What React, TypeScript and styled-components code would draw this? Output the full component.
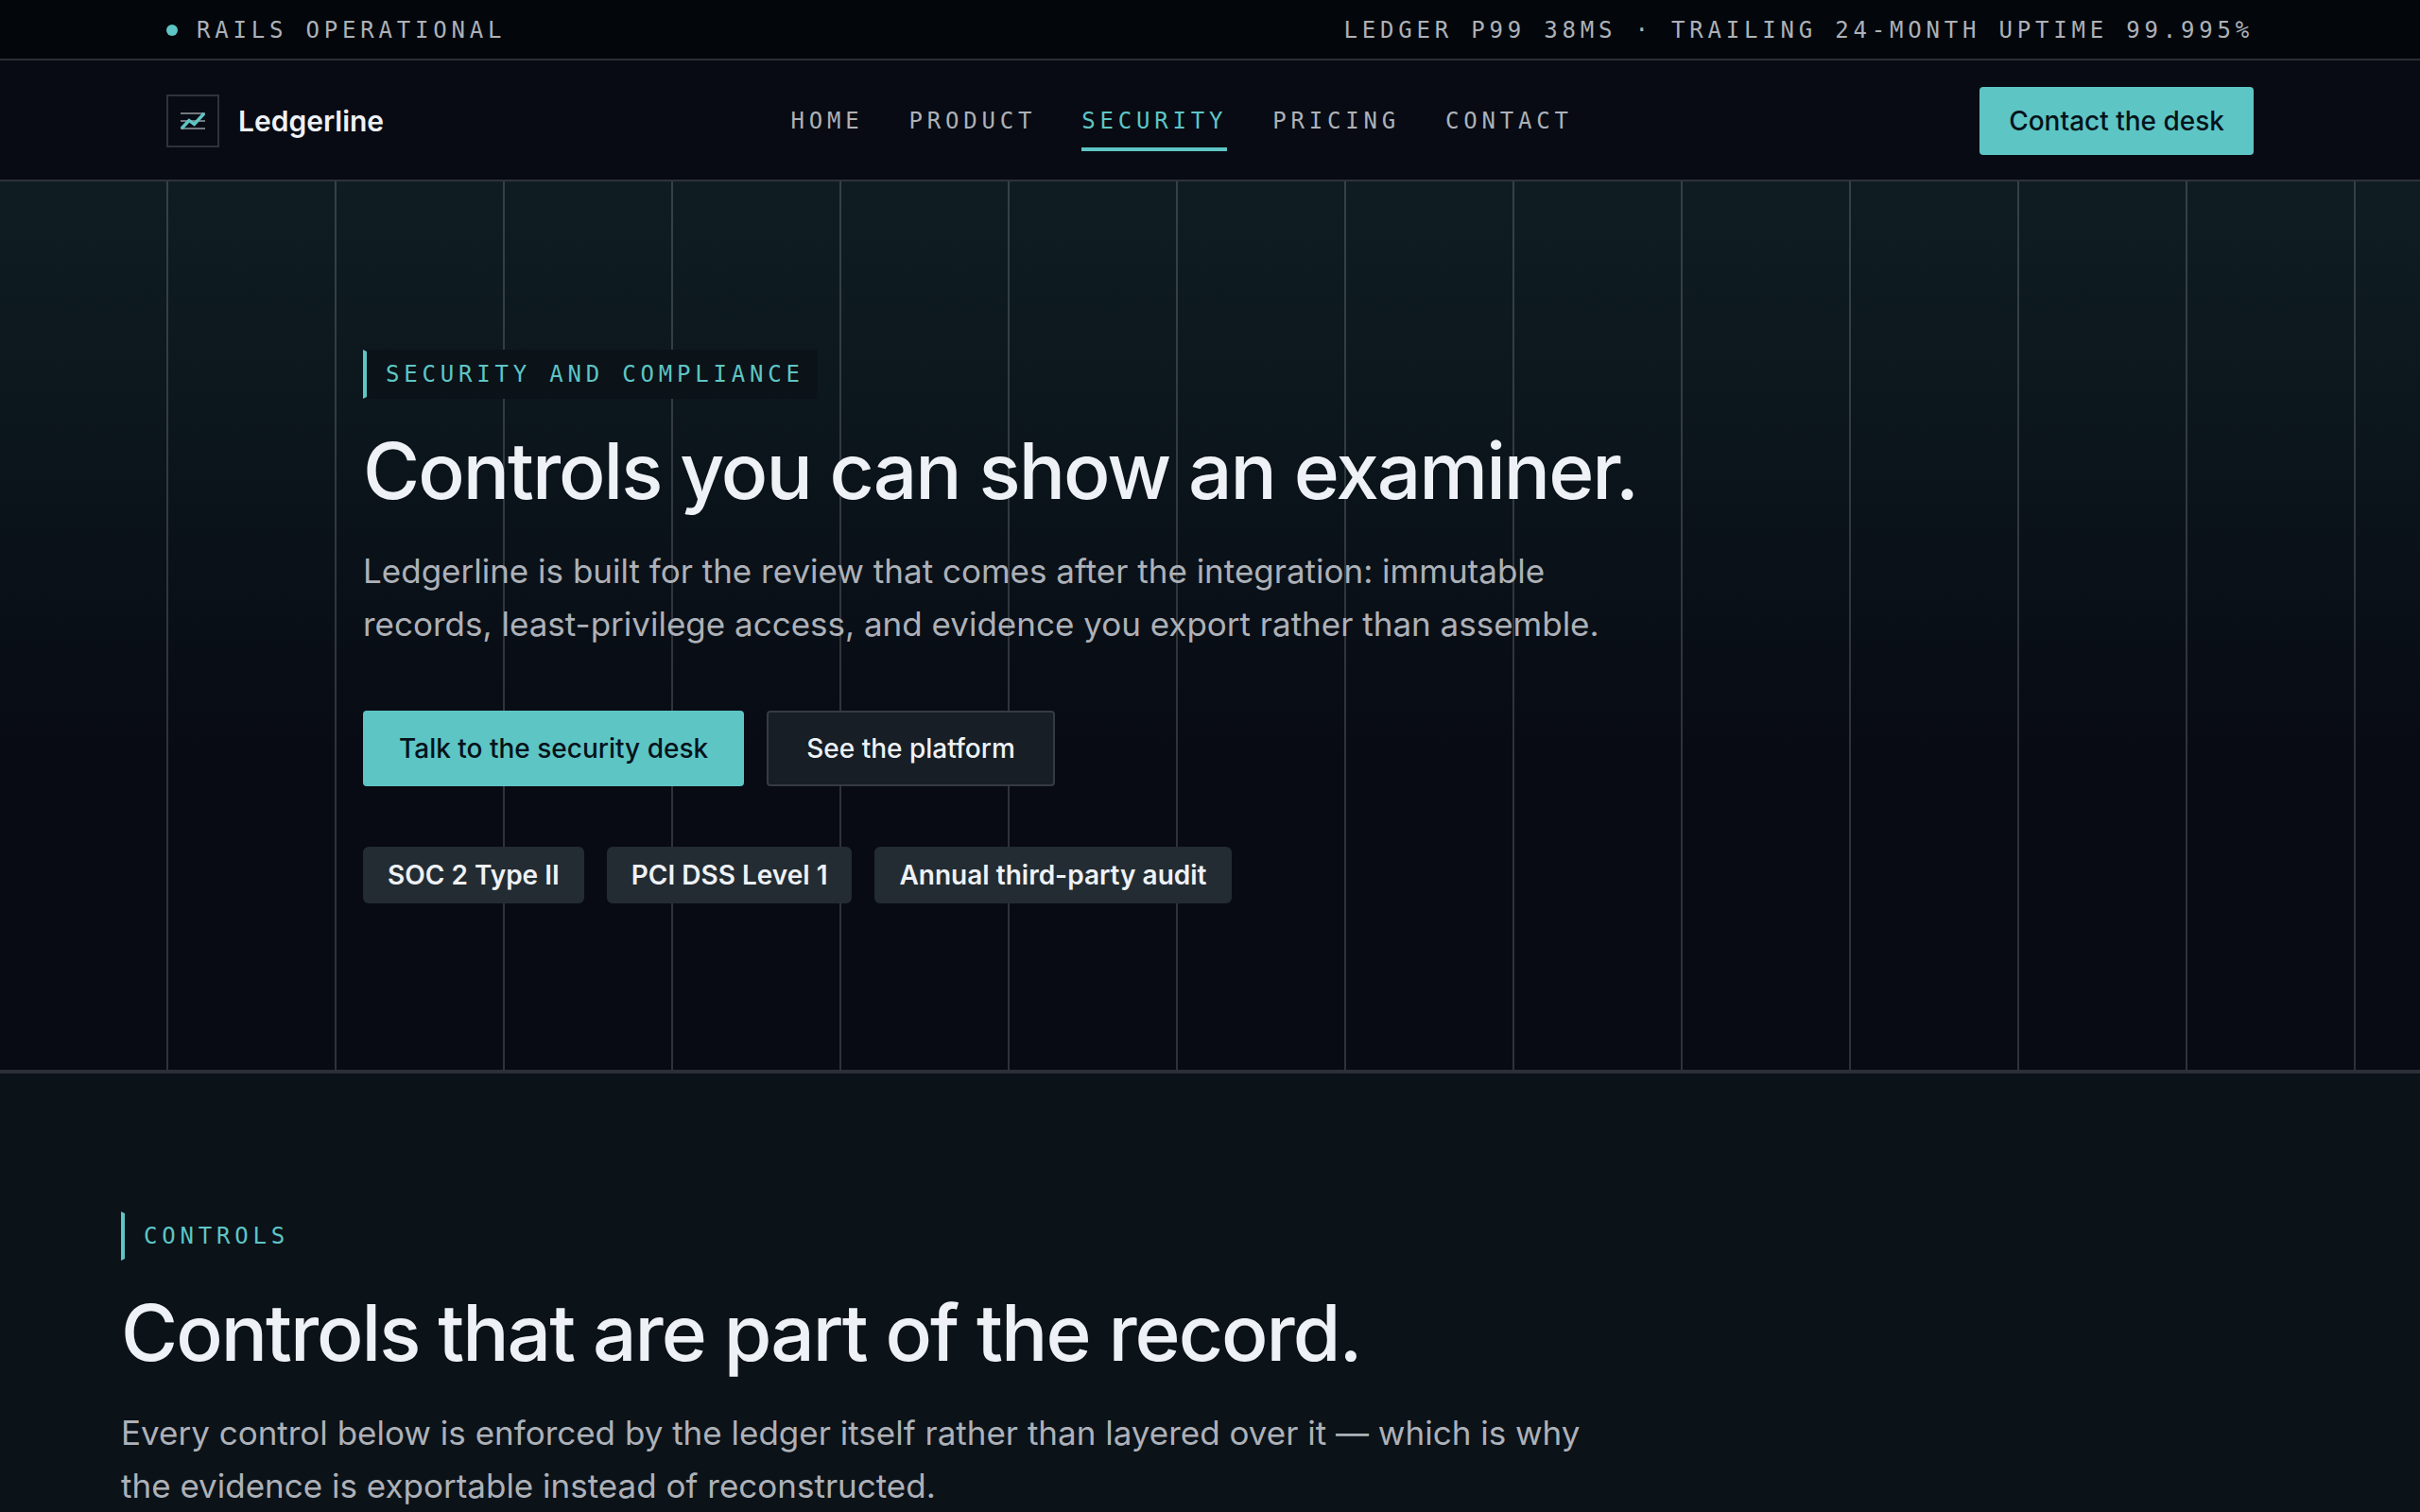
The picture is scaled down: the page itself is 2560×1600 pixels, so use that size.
import React from "react";
import styled, { createGlobalStyle, css } from "styled-components";

const color = {
  strip: "#03070b",
  header: "#080b13",
  raised: "#0b1218",
  line: "rgba(255, 255, 255, 0.16)",
  accent: "#5ec5c5",
  ink: "#06131a",
  text: "#eef1f6",
  muted: "#adb1b8",
};

const sans = `Inter, "Liberation Sans", sans-serif`;
const mono = `"DejaVu Sans Mono", "Liberation Mono", monospace`;

const GlobalStyle = createGlobalStyle`
  *, *::before, *::after { box-sizing: border-box; }
  html { background: ${color.raised}; }
  body { margin: 0; font-family: ${sans}; color: ${color.text}; -webkit-font-smoothing: antialiased; overflow-x: hidden; }
  h1, h2, p, ul { margin: 0; padding: 0; }
  ul { list-style: none; }
  a { color: inherit; text-decoration: none; }
`;

const label = css`
  font-family: ${mono};
  font-size: 24px;
  letter-spacing: 0.2em;
  text-transform: uppercase;
  white-space: nowrap;
`;

const StatusStrip = styled.div`
  display: flex;
  justify-content: space-between;
  align-items: center;
  height: 64px;
  padding: 2px 176px 0;
  background: ${color.strip};
  border-bottom: 2px solid ${color.line};
  color: ${color.muted};
  ${label}
`;

const Status = styled.span`
  display: flex;
  align-items: center;
  gap: 20px;
`;

const Dot = styled.i`
  width: 12px;
  height: 12px;
  border-radius: 50%;
  background: ${color.accent};
`;

const Header = styled.header`
  display: flex;
  justify-content: space-between;
  align-items: center;
  padding: 28px 176px 26px;
  background: ${color.header};
  border-bottom: 2px solid ${color.line};
`;

const Brand = styled.a`
  display: flex;
  align-items: center;
  gap: 20px;
  font-size: 30px;
  font-weight: 600;
`;

const Mark = styled.span`
  display: grid;
  place-items: center;
  width: 56px;
  height: 56px;
  border: 2px solid ${color.line};
`;

const Nav = styled.nav`
  display: flex;
  gap: 48px;
`;

const NavLink = styled.a<{ $active?: boolean }>`
  ${label}
  line-height: 64px;
  color: ${(p) => (p.$active ? color.accent : color.muted)};
  box-shadow: ${(p) => (p.$active ? `inset 0 -4px ${color.accent}` : "none")};
`;

const Button = styled.button<{ $compact?: boolean }>`
  height: ${(p) => (p.$compact ? 72 : 80)}px;
  padding: 0 ${(p) => (p.$compact ? 31 : 38)}px;
  border: 0;
  border-radius: 4px;
  background: ${color.accent};
  color: ${color.ink};
  font: 500 28px/40px ${sans};
  white-space: nowrap;
  cursor: pointer;
`;

const OutlineButton = styled(Button)`
  padding: 0 40px;
  border: 2px solid #343b43;
  background: #171e25;
  color: ${color.text};
`;

const Hero = styled.section`
  padding: 178px 384px 176px;
  border-bottom: 4px solid #2c2f37;
  background:
    linear-gradient(90deg, ${color.line} 2px, transparent 2px) 176px 0 / 178px 100%,
    linear-gradient(180deg, #0f1d23 0%, #0b141b 34%, #080b13 64%);
`;

const Section = styled.section`
  padding: 146px 128px;
  background: ${color.raised};
`;

const Eyebrow = styled.p`
  ${label}
  width: fit-content;
  height: 52px;
  padding: 0 12px 0 20px;
  border: 2px solid transparent;
  border-left: 4px solid ${color.accent};
  background: ${color.raised};
  color: ${color.accent};
  line-height: 48px;
`;

const heading = css`
  margin-top: 32px;
  font-size: 82px;
  line-height: 90px;
  font-weight: 500;
  letter-spacing: -2px;
`;

const Title = styled.h1`
  ${heading}
`;

const SectionTitle = styled.h2`
  ${heading}
`;

const Lead = styled.p<{ $wide?: boolean }>`
  max-width: ${(p) => (p.$wide ? 1560 : 1320)}px;
  margin-top: 32px;
  color: ${color.muted};
  font-size: 35px;
  line-height: 56px;
`;

const Actions = styled.div`
  display: flex;
  gap: 24px;
  margin-top: 64px;
`;

const Badges = styled.ul`
  display: flex;
  gap: 24px;
  margin-top: 64px;
`;

const Badge = styled.li`
  padding: 0 26px;
  border-radius: 6px;
  background: #232c32;
  font-size: 28px;
  font-weight: 600;
  line-height: 60px;
`;

const links = ["Home", "Product", "Security", "Pricing", "Contact"];
const badges = ["SOC 2 Type II", "PCI DSS Level 1", "Annual third-party audit"];

export default function App() {
  return (
    <>
      <GlobalStyle />
      <StatusStrip>
        <Status>
          <Dot />
          Rails operational
        </Status>
        <span>Ledger p99 38ms · Trailing 24-month uptime 99.995%</span>
      </StatusStrip>
      <Header>
        <Brand href="#">
          <Mark>
            <svg width="32" height="32" viewBox="0 0 32 32" fill="none" aria-hidden="true">
              <path d="M3 8H29M3 16H29M3 24H29" stroke="#72767e" strokeWidth="2" />
              <path d="M4 24L12 15.5L17.5 19.5L28 8" stroke={color.accent} strokeWidth="3.4" />
            </svg>
          </Mark>
          Ledgerline
        </Brand>
        <Nav aria-label="Primary">
          {links.map((name) => (
            <NavLink key={name} href="#" $active={name === "Security"}>
              {name}
            </NavLink>
          ))}
        </Nav>
        <Button $compact>Contact the desk</Button>
      </Header>
      <main>
        <Hero>
          <Eyebrow>Security and compliance</Eyebrow>
          <Title>Controls you can show an examiner.</Title>
          <Lead>
            Ledgerline is built for the review that comes after the integration: immutable records, least-privilege
            access, and evidence you export rather than assemble.
          </Lead>
          <Actions>
            <Button>Talk to the security desk</Button>
            <OutlineButton>See the platform</OutlineButton>
          </Actions>
          <Badges>
            {badges.map((name) => (
              <Badge key={name}>{name}</Badge>
            ))}
          </Badges>
        </Hero>
        <Section>
          <Eyebrow>Controls</Eyebrow>
          <SectionTitle>Controls that are part of the record.</SectionTitle>
          <Lead $wide>
            Every control below is enforced by the ledger itself rather than layered over it — which is why the evidence
            is exportable instead of reconstructed.
          </Lead>
        </Section>
      </main>
    </>
  );
}
